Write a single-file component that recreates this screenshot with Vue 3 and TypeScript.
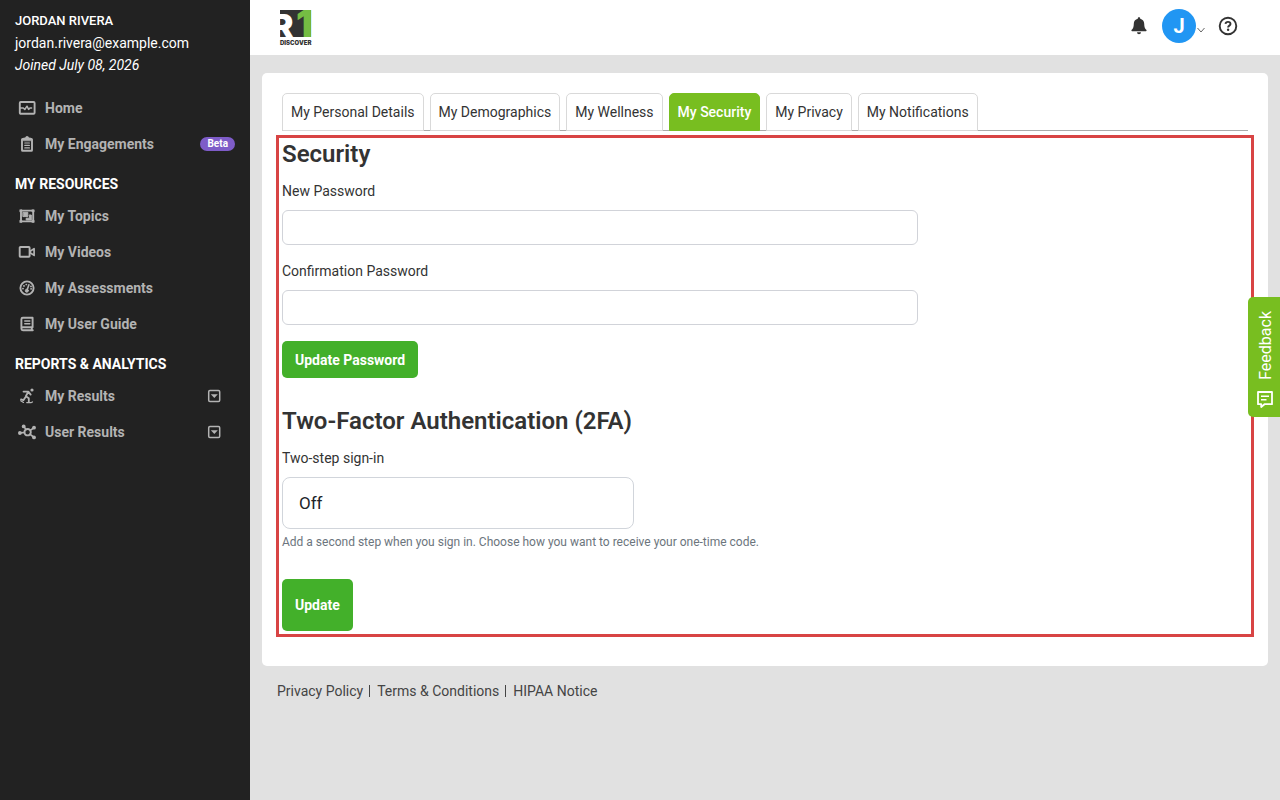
<script setup lang="ts">
import { ref } from 'vue'

interface NavItem {
  label: string
  icon: string
  badge?: string
  expandable?: boolean
}
interface NavGroup {
  title?: string
  items: NavItem[]
}

const groups: NavGroup[] = [
  {
    items: [
      { label: 'Home', icon: 'monitor' },
      { label: 'My Engagements', icon: 'clipboard', badge: 'Beta' },
    ],
  },
  {
    title: 'MY RESOURCES',
    items: [
      { label: 'My Topics', icon: 'topics' },
      { label: 'My Videos', icon: 'video' },
      { label: 'My Assessments', icon: 'gauge' },
      { label: 'My User Guide', icon: 'book' },
    ],
  },
  {
    title: 'REPORTS & ANALYTICS',
    items: [
      { label: 'My Results', icon: 'runner', expandable: true },
      { label: 'User Results', icon: 'network', expandable: true },
    ],
  },
]

const tabs = ['My Personal Details', 'My Demographics', 'My Wellness', 'My Security', 'My Privacy', 'My Notifications']
const activeTab = ref('My Security')
const password = ref('')
const confirmation = ref('')
const twoStep = ref('Off')
const footerLinks = ['Privacy Policy', 'Terms & Conditions', 'HIPAA Notice']
</script>

<template>
  <div class="app">
    <aside class="sidebar">
      <div class="profile">
        <strong>JORDAN RIVERA</strong>
        <span>jordan.rivera@example.com</span>
        <em>Joined July 08, 2026</em>
      </div>
      <nav>
        <template v-for="(group, i) in groups" :key="i">
          <h2 v-if="group.title" class="group-title">{{ group.title }}</h2>
          <a v-for="item in group.items" :key="item.label" href="#" class="nav-item">
            <svg class="nav-icon" viewBox="0 0 18 18" fill="none" stroke="currentColor" stroke-width="1.9" stroke-linejoin="round" stroke-linecap="round" aria-hidden="true">
              <template v-if="item.icon === 'monitor'">
                <rect x="1.8" y="3" width="14.8" height="11.800" rx="1" />
                <path d="M2.500 9h2.800l1.500 1.500L9 7.200l1.600 3.200L12 9h1.600" stroke-width="1.500" />
              </template>
              <template v-else-if="item.icon === 'clipboard'">
                <rect x="4" y="4" width="10" height="11.800" rx=".6" />
                <path d="M5.500 5.400V3h2a1.600 1.600 0 0 1 3.200 0h2v2.400z" fill="currentColor" stroke-width=".8" />
                <path d="M6.800 8h4.600M6.800 10.400h4.600M6.800 12.900h4.600" stroke-width="1.200" />
              </template>
              <template v-else-if="item.icon === 'topics'">
                <rect x="3" y="3.600" width="12.200" height="10.800" />
                <path d="M2 2.800h2v2H2zM14.200 2.800h2v2h-2zM2 13.400h2v2H2zM14.200 13.400h2v2h-2z" fill="currentColor" stroke-width=".6" />
                <path d="M5.200 5.300h4.600v4.300H5.200z" fill="currentColor" stroke-width="1" />
                <path d="M11.500 8H13.300v5H8.200v-1.800h3.300z" fill="currentColor" stroke-width="1" />
              </template>
              <template v-else-if="item.icon === 'video'">
                <rect x="1.700" y="4" width="9.900" height="9.800" rx=".8" />
                <path d="M12.200 8.200l3.900-2.600v6.800l-3.900-2.600" stroke-width="1.700" />
              </template>
              <template v-else-if="item.icon === 'gauge'">
                <circle cx="9" cy="9" r="6.600" />
                <path d="M10.900 5.800L9.300 10.500" stroke-width="1.600" />
                <circle cx="8.800" cy="11.700" r="1.500" fill="currentColor" stroke-width="1" />
                <path d="M4.900 9.600h.2M5.900 6.900h.2M8.200 5.500h.2M12.900 7.400h.2M13 9.800h.2" stroke-width="1.700" />
              </template>
              <template v-else-if="item.icon === 'book'">
                <path d="M14.600 12.200V2.700H4.900a1.500 1.500 0 0 0-1.500 1.500v9.500a1.500 1.500 0 0 0 1.500 1.500h9.900M14.600 12.200H4.900a1.400 1.400 0 0 0-1.400 1.200M13.800 12.500v2.500" />
                <path d="M6.800 6h5M6.800 8.700h5" stroke-width="1.500" />
              </template>
              <template v-else-if="item.icon === 'runner'">
                <circle cx="14" cy="3" r="1.600" fill="currentColor" stroke="none" />
                <path d="M5.500 4.600h4.800l2.400 3M10.200 5L7.800 9.300l3 2v3.500M7.400 10.200l-2 3-2.400-.8" stroke-width="1.800" />
                <path d="M2.700 13.700l2.800 1.700M8.700 15.600h4.600l1.200-.7" stroke-width="1.200" />
              </template>
              <template v-else>
                <circle cx="9.600" cy="9.200" r="3.200" />
                <path d="M2.500 9.900l4-.4M6 3.600l2 3M15.600 5l-3.400 2.300M15.500 14l-3.600-2.800" stroke-width="1.600" />
                <g fill="currentColor" stroke="none">
                  <circle cx="1.900" cy="10" r="1.900" />
                  <circle cx="5.700" cy="3.400" r="1.900" />
                  <circle cx="16" cy="4.700" r="1.900" />
                  <circle cx="16" cy="14.400" r="1.900" />
                </g>
              </template>
            </svg>
            <span class="nav-label">{{ item.label }}</span>
            <span v-if="item.badge" class="badge">{{ item.badge }}</span>
            <svg v-if="item.expandable" class="expander" viewBox="0 0 14 14" aria-hidden="true">
              <rect x="1.700" y="1.500" width="11" height="11" rx="1.200" fill="none" stroke="currentColor" stroke-width="1.500" />
              <path d="M3.800 5.200h7L7.300 9z" fill="currentColor" />
            </svg>
          </a>
        </template>
      </nav>
    </aside>

    <div class="main">
      <header class="topbar">
        <a href="#" class="logo" aria-label="R1 Discover">
          <svg viewBox="0 0 36 36">
            <path d="M0 0h31v27H0z" fill="#333" />
            <text x="-8" y="27" font-family="Inter, sans-serif" font-weight="900" font-size="32" fill="#fff">R</text>
            <text x="16" y="27" font-family="Inter, sans-serif" font-weight="900" font-size="37" fill="#75bd43">1</text>
            <text x="0" y="35" font-family="Inter, sans-serif" font-weight="900" font-size="6" fill="#333">DISCOVER</text>
          </svg>
        </a>
        <div class="actions">
          <button type="button" class="icon-button" aria-label="Notifications">
            <svg width="18" height="20" viewBox="0 0 18 20" fill="#333">
              <path d="M9 1.200c-.8 0-1.200.5-1.200 1.100v.5C5.200 3.300 3.800 5.200 3.800 7.700c0 3.600-.9 5-2.100 6.100-.4.400-.5 1.500.4 1.500h13.800c.9 0 .8-1.100.4-1.500-1.200-1.100-2.100-2.500-2.100-6.100 0-2.500-1.500-4.400-4-4.900v-.5c0-.6-.4-1.100-1.200-1.100zM7 16.300h4a2 2 0 0 1-4 0z" />
            </svg>
          </button>
          <button type="button" class="account" aria-label="Account menu">
            <span class="avatar">J</span>
            <svg width="10" height="8" viewBox="0 0 10 8" fill="none" stroke="#666" stroke-width="1"><path d="M1.500 2l3.500 4 3.500-4" /></svg>
          </button>
          <button type="button" class="icon-button" aria-label="Help">
            <svg width="20" height="20" viewBox="0 0 20 20" fill="none" stroke="#333" stroke-width="1.900">
              <circle cx="10" cy="10" r="8.300" />
              <path d="M7.500 7.900c.2-1.300 1.200-2 2.500-2 1.500 0 2.500.8 2.500 2.100 0 1.600-2.400 1.700-2.400 3.400" />
              <circle cx="10.100" cy="13.800" r="1.200" fill="#333" stroke="none" />
            </svg>
          </button>
        </div>
      </header>

      <main class="panel">
        <div class="tabs" role="tablist">
          <button v-for="tab in tabs" :key="tab" type="button" role="tab" class="tab" :class="{ active: tab === activeTab }" :aria-selected="tab === activeTab" @click="activeTab = tab">{{ tab }}</button>
        </div>
        <section class="security">
          <form @submit.prevent>
            <h1>Security</h1>
            <label for="new-password">New Password</label>
            <input id="new-password" v-model="password" type="password" />
            <label for="confirm-password" class="next-label">Confirmation Password</label>
            <input id="confirm-password" v-model="confirmation" type="password" />
            <button type="submit" class="primary password-submit">Update Password</button>
          </form>
          <form class="two-factor" @submit.prevent>
            <h1>Two-Factor Authentication (2FA)</h1>
            <label for="two-step">Two-step sign-in</label>
            <select id="two-step" v-model="twoStep">
              <option>Off</option>
              <option>Email</option>
              <option>Text message</option>
            </select>
            <p>Add a second step when you sign in. Choose how you want to receive your one-time code.</p>
            <button type="submit" class="primary tall">Update</button>
          </form>
        </section>
      </main>

      <footer>
        <a v-for="link in footerLinks" :key="link" href="#">{{ link }}</a>
      </footer>
    </div>

    <button type="button" class="feedback">
      <svg width="18" height="18" viewBox="0 0 18 18" fill="none" stroke="#fff" stroke-width="1.800" stroke-linejoin="round" aria-hidden="true">
        <path d="M2 2h14v12.200H8.500L5.200 17v-2.800H2z" />
        <path d="M5 6.200h8M5 9.800h5.500" stroke-width="1.600" />
      </svg>
      <span>Feedback</span>
    </button>
  </div>
</template>

<style>
body {
  margin: 0;
  background: #e1e1e1;
}
</style>

<style scoped>
.app {
  display: flex;
  min-height: 100vh;
  font-family: Roboto, "Liberation Sans", sans-serif;
  font-size: 14px;
  line-height: 20px;
  color: #333;
  background: #e1e1e1;
}
button, input, select {
  box-sizing: border-box;
  font-family: inherit;
  font-size: 14px;
}
button {
  cursor: pointer;
}
a {
  color: inherit;
  text-decoration: none;
}
.sidebar {
  box-sizing: border-box;
  flex: 0 0 250px;
  padding: 10px 15px;
  background: #222;
  color: #b3b3b3;
}
.profile {
  display: flex;
  flex-direction: column;
  margin-bottom: 14px;
  line-height: 22px;
  color: #fff;
}
.profile strong {
  font-size: 13px;
  font-weight: 500;
}
.group-title {
  margin: 0;
  padding: 12px 0 4px;
  font-size: 14px;
  font-weight: 700;
  line-height: 20px;
  color: #fff;
}
.nav-item {
  display: flex;
  align-items: center;
  height: 36px;
  font-weight: 700;
}
.nav-icon {
  width: 18px;
  height: 18px;
  margin: 0 9px 0 3px;
}
.nav-label {
  flex: 1;
}
.badge {
  padding: 0 7px;
  border-radius: 7px;
  background: #7e5cc8;
  color: #fff;
  font-size: 10px;
  line-height: 14px;
}
.expander {
  width: 14px;
  height: 14px;
  margin-right: 14px;
}
.main {
  flex: 1;
  min-width: 0;
}
.topbar {
  box-sizing: border-box;
  display: flex;
  align-items: center;
  justify-content: space-between;
  height: 55px;
  padding: 0 42px 0 30px;
  background: #fff;
}
.logo svg {
  display: block;
  width: 36px;
  height: 36px;
  overflow: visible;
}
.actions {
  display: flex;
  align-items: center;
  gap: 12px;
  margin-bottom: 3px;
}
.icon-button, .account {
  display: flex;
  align-items: center;
  padding: 0;
  border: 0;
  background: none;
}
.icon-button:first-child {
  margin-right: 2px;
}
.account svg {
  margin-top: 8px;
}
.avatar {
  width: 34px;
  border-radius: 50%;
  background: #2196f3;
  color: #fff;
  font-size: 20px;
  font-weight: 700;
  line-height: 34px;
}
.panel {
  margin: 18px 12px 0;
  padding: 20px 20px 35px;
  border-radius: 5px;
  background: #fff;
}
.tabs {
  display: flex;
  gap: 6px;
  border-bottom: 1px solid #aaa;
}
.tab {
  height: 38px;
  margin-bottom: -1px;
  padding: 0 8px;
  border: 1px solid #d9d9d9;
  border-radius: 5px 5px 0 0;
  background: #fff;
  color: #333;
}
.tab.active {
  border-color: #78be20;
  background: #78be20;
  color: #fff;
  font-weight: 500;
}
.security {
  margin-top: 10px;
  outline: 3px solid #d84444;
  outline-offset: 3px;
}
h1 {
  margin: 0 0 14px;
  font-size: 24px;
  font-weight: 600;
  line-height: 26px;
}
label {
  display: block;
  margin-bottom: 9px;
}
.next-label {
  margin-top: 16px;
}
input {
  display: block;
  width: 100%;
  max-width: 636px;
  height: 35px;
  padding: 0 12px;
  border: 1px solid #d1d3d9;
  border-radius: 6px;
  background: #fff;
}
select {
  display: block;
  width: 100%;
  max-width: 352px;
  height: 52px;
  padding: 0 16px;
  border: 1px solid #d1d5db;
  border-radius: 8px;
  background: #fff;
  color: #212529;
  font-size: 17px;
  appearance: none;
}
.primary {
  display: block;
  height: 37px;
  padding: 0 13px;
  border: 0;
  border-radius: 5px;
  background: #43b02a;
  color: #fff;
  font-weight: 700;
}
.password-submit {
  margin-top: 16px;
}
.two-factor {
  margin-top: 30px;
}
.two-factor p {
  margin: 4px 0 28px;
  color: #6c757d;
  font-size: 12px;
  line-height: 18px;
}
.primary.tall {
  height: 52px;
}
footer {
  display: flex;
  align-items: center;
  padding: 15px 27px;
  color: #444;
}
footer a + a {
  margin-left: 6px;
  padding-left: 7px;
  border-left: 1px solid #444;
  line-height: 12px;
}
.feedback {
  position: fixed;
  right: 0;
  top: 297px;
  display: flex;
  flex-direction: column-reverse;
  align-items: center;
  justify-content: flex-start;
  gap: 10px;
  width: 32px;
  height: 120px;
  padding: 0 0 9px 2px;
  border: 0;
  border-radius: 5px 0 0 5px;
  background: #78be20;
  color: #fff;
  font-size: 16px;
}
.feedback span {
  writing-mode: vertical-rl;
  transform: rotate(180deg);
}
</style>
